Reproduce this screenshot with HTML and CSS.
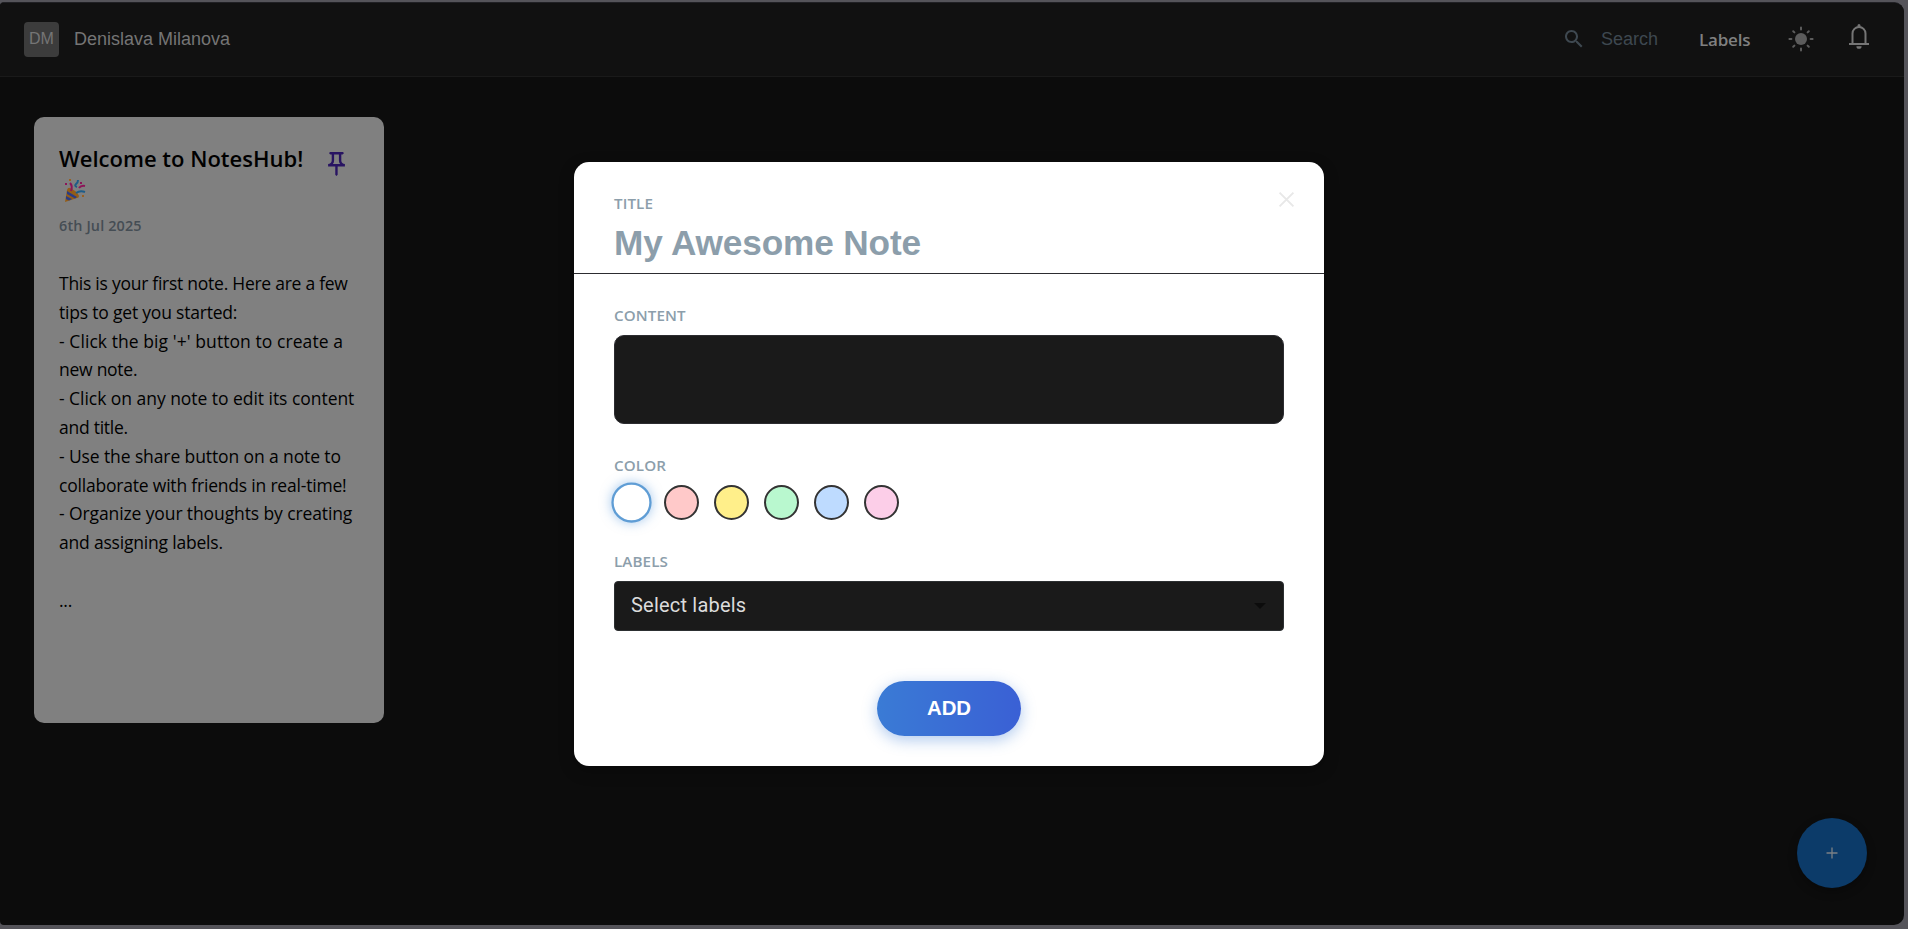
FILE: index.html
```html
<!DOCTYPE html>
<html lang="en">
<head>
<meta charset="utf-8">
<title>NotesHub</title>
<link rel="stylesheet" href="styles.css">
</head>
<body>
<div class="app">
  <header class="topbar">
    <div class="avatar">DM</div>
    <div class="username">Denislava Milanova</div>
    <div class="tools">
      <svg class="ic-search" viewBox="0 0 24 24"><path d="M15.5 14h-.79l-.28-.27C15.41 12.59 16 11.11 16 9.5 16 5.91 13.09 3 9.5 3S3 5.91 3 9.5 5.91 16 9.5 16c1.61 0 3.09-.59 4.23-1.57l.27.28v.79l5 4.99L20.49 19l-4.99-5zm-6 0C7.01 14 5 11.99 5 9.5S7.01 5 9.5 5 14 7.01 14 9.5 11.99 14 9.5 14z"/></svg>
      <span class="search">Search</span>
      <span class="nav-labels">Labels</span>
      <svg class="ic-sun" viewBox="-13 -13 26 26"><circle r="6" /><path d="M0-9.6V-11.6M0 9.6V11.6M-9.6 0H-11.6M9.6 0H11.6M-6.6-6.6L-7.8-7.8M6.6-6.6L7.8-7.8M-6.6 6.6L-7.8 7.8M6.6 6.6L7.8 7.8"/></svg>
      <svg class="ic-bell" viewBox="0 0 20 25"><path class="line" d="M0 20H20M3.5 20V9.5a6.5 6.5 0 0 1 13 0V20"/><path d="M8.5 3V1.5a1.5 1.5 0 0 1 3 0V3zM7.4 22.2h5.2a2.6 2.6 0 0 1-5.2 0z"/></svg>
    </div>
  </header>
  <main class="board">
    <article class="note">
      <div class="note-head">
        <h2>Welcome to NotesHub!
          <svg class="party" viewBox="0 0 22 24"><path fill="#935c17" d="M1 23L3 11q1-3 3-2 7 3 9 8 0 2-2 2z"/><path fill="#2b3c84" d="M2 17l6 3-3 1.500-3-1.500zM3 12l10 6-2 1.500-8-4.500z"/><path class="st" stroke="#8c1558" d="M6 4q3 3 1 8M15 9q2-3 6-2"/><path class="st" stroke="#1d5c88" d="M13 8q-3-1-1-3 2-1 2-4M12 14q4-3 9-1"/><path fill="#8c1558" d="M1 4h2v2H1zM16 3h2v2h-2z"/><path fill="#996020" d="M5 0h2v2H5zM18 16h2v2h-2z"/></svg></h2>
        <svg class="pin" viewBox="5 2 14 20"><path d="M14 4v5c0 1.12.37 2.16 1 3H9c.65-.86 1-1.9 1-3V4h4m3-2H7c-.55 0-1 .45-1 1s.45 1 1 1h1v5c0 1.66-1.34 3-3 3v2h5.97v7l1 1 1-1v-7H19v-2c-1.66 0-3-1.34-3-3V4h1c.55 0 1-.45 1-1s-.45-1-1-1z"/></svg>
      </div>
      <div class="date">6th Jul 2025</div>
      <p class="text">This is your first note. Here are a few
<span class="s1">tips to get you started:</span>
<span class="s4">- Click the big '+' button to create a</span>
new note.
<span class="s3">- Click on any note to edit its content</span>
and title.
<span class="s2">- Use the share button on a note to</span>
<span class="s1">collaborate with friends in real-time!</span>
<span class="s2">- Organize your thoughts by creating</span>
<span class="s1">and assigning labels.</span>

...</p>
    </article>
  </main>
  <button class="fab"><svg viewBox="0 0 12 12"><path d="M6 .5v11M.5 6h11"/></svg></button>
</div>
<div class="overlay">
  <section class="modal">
    <div class="modal-head">
      <div class="label">TITLE</div>
      <div class="title-input">My Awesome Note</div>
      <svg class="close" viewBox="0 0 16 16"><path d="M1.5 1.5l13 13M14.5 1.5l-13 13"/></svg>
    </div>
    <div class="modal-body">
      <div class="label">CONTENT</div>
      <div class="content-input"></div>
      <div class="label">COLOR</div>
      <div class="swatches">
        <i class="swatch white"></i><i class="swatch red"></i><i class="swatch yellow"></i><i class="swatch green"></i><i class="swatch blue"></i><i class="swatch pink"></i>
      </div>
      <div class="label">LABELS</div>
      <div class="select"><span>Select labels</span><i class="caret"></i></div>
      <button class="add"><span>ADD</span></button>
    </div>
  </section>
</div>
</body>
</html>
```
FILE: styles.css
```css
* { box-sizing: border-box; }
html, body { height: 100%; }
body {
  margin: 0;
  padding: 2px 4px 4px 0;
  background: #55545a;
  overflow: hidden;
  font-family: "Open Sans", "Noto Sans", sans-serif;
}
button { border: 0; padding: 0; }
svg { display: block; flex: none; }
.app {
  height: 923px;
  border-radius: 4px 10px 10px 4px;
  border-top: 1px solid #202024;
  background: #0c0c0c;
  overflow: hidden;
}
.topbar {
  display: flex;
  align-items: center;
  height: 74px;
  padding: 0 35px 0 24px;
  background: #111;
  border-bottom: 1px solid #1a1a1a;
  font: 18px "Liberation Sans", Arial, sans-serif;
}
.avatar {
  width: 35px;
  height: 35px;
  border-radius: 4px;
  background: #3c3c3c;
  color: #757575;
  font-size: 16px;
  line-height: 33px;
  text-align: center;
}
.username { margin: 0 0 2px 15px; color: #757575; line-height: 20px; }
.tools { display: flex; align-items: center; margin: 0 0 2px auto; }
.ic-search { width: 24px; height: 24px; fill: #3e4850; }
.search { margin: 1px 0 0 15px; width: 58px; color: #3e4850; }
.nav-labels {
  width: 52px;
  margin: 2px 0 0 40px;
  color: #808080;
  font: 600 17px/22px "Open Sans", sans-serif;
  letter-spacing: -.2px;
}
.ic-sun { width: 26px; height: 26px; margin-left: 37px; fill: #5c5c5c; }
.ic-sun path { stroke: #5c5c5c; stroke-width: 2; stroke-linecap: round; }
.ic-bell { width: 20px; height: 25px; margin: -4px 0 0 35px; fill: #757575; }
.ic-bell .line { fill: none; stroke: #757575; stroke-width: 2; }
.board { padding: 40px 34px; }
.note {
  width: 350px;
  height: 606px;
  padding: 26px 25px;
  border-radius: 10px;
  background: #808080;
  color: #000;
}
.note-head { display: flex; justify-content: space-between; }
.note h2 {
  height: 62px;
  margin: 0;
  font-size: 22px;
  line-height: 31px;
  font-weight: 600;
  white-space: nowrap;
}
.party { width: 22px; height: 24px; margin: 5px 0 0 5px; }
.party .st { fill: none; stroke-width: 2; }
.pin { width: 17px; height: 24px; margin: 9px 14px 0 0; fill: #281462; }
.date { margin-top: 11px; color: #454d54; font-size: 14.4px; font-weight: 600; line-height: 20px; letter-spacing: .15px; }
.text {
  margin: 33px 0 0;
  font-size: 17.5px;
  line-height: 28.8px;
  letter-spacing: -.26px;
  white-space: pre;
}
.s1 { letter-spacing: -.2px; }
.s2 { letter-spacing: -.11px; }
.s3 { letter-spacing: -.04px; }
.s4 { letter-spacing: .07px; }
.fab {
  position: absolute;
  left: 1797px;
  top: 818px;
  width: 70px;
  height: 70px;
  border-radius: 50%;
  background: #0c3b69;
  box-shadow: 0 4px 10px rgba(0, 0, 0, .3);
}
.fab svg { width: 12px; height: 12px; margin: 0 auto; }
.fab path { stroke: #7b8085; stroke-width: 1.3; }
.overlay {
  position: absolute;
  inset: 0;
  display: flex;
  justify-content: center;
  align-items: flex-start;
  padding: 162px 10px 0 0;
}
.modal {
  width: 750px;
  height: 604px;
  border-radius: 15px;
  background: #fff;
  box-shadow: 0 5px 15px rgba(0, 0, 0, .25);
}
.modal-head {
  position: relative;
  height: 112px;
  padding: 30px 40px 0;
  border-bottom: 1px solid #2c2c30;
}
.label { color: #8c9eab; font-size: 15.2px; font-weight: 600; line-height: 22px; letter-spacing: .1px; }
.title-input {
  margin-top: 9px;
  color: #8c9eab;
  font: bold 35.2px/40px "Liberation Sans", Arial, sans-serif;
  letter-spacing: -.13px;
  white-space: nowrap;
}
.close { position: absolute; left: 704px; top: 29px; width: 17px; height: 17px; }
.close path { stroke: #e8e8e8; stroke-width: 1.8; }
.modal-body { display: flex; flex-direction: column; padding: 30px 40px 0; }
.content-input {
  height: 89px;
  margin: 9px 0 30px;
  border: 1px solid #2c2c30;
  border-radius: 10px;
  background: #1a1a1a;
}
.swatches { display: flex; gap: 15px; margin: 9px 0 30px; }
.swatch { width: 35px; height: 35px; border: 2px solid #333; border-radius: 50%; }
.white { background: #fff; border-color: #5f9dd5; transform: scale(1.15); box-shadow: 0 0 10px rgba(74, 144, 217, .5); }
.red { background: #ffc9c9; }
.yellow { background: #ffef8a; }
.green { background: #b9f8cf; }
.blue { background: #bedbff; }
.pink { background: #fccee8; }
.select {
  display: flex;
  align-items: center;
  justify-content: space-between;
  height: 50px;
  margin-top: 9px;
  padding: 0 17px 0 16px;
  border: 1px solid #2c2f31;
  border-radius: 4px;
  background: #1a1a1a;
  color: #dcdcdc;
  font: 400 20px Roboto, sans-serif;
  letter-spacing: .2px;
}
.select span { margin-bottom: 2px; }
.caret { border: 6px solid transparent; border-top-color: #0c0c0c; margin-top: 6px; }
.add {
  align-self: center;
  width: 144px;
  height: 55px;
  margin-top: 50px;
  padding-bottom: 1px;
  border-radius: 28px;
  background: linear-gradient(90deg, #3a7bd5, #3a60d5);
  box-shadow: 0 4px 15px rgba(58, 123, 213, .4);
  color: #fff;
  font: 700 20.4px "Liberation Sans", Arial, sans-serif;
}
```
